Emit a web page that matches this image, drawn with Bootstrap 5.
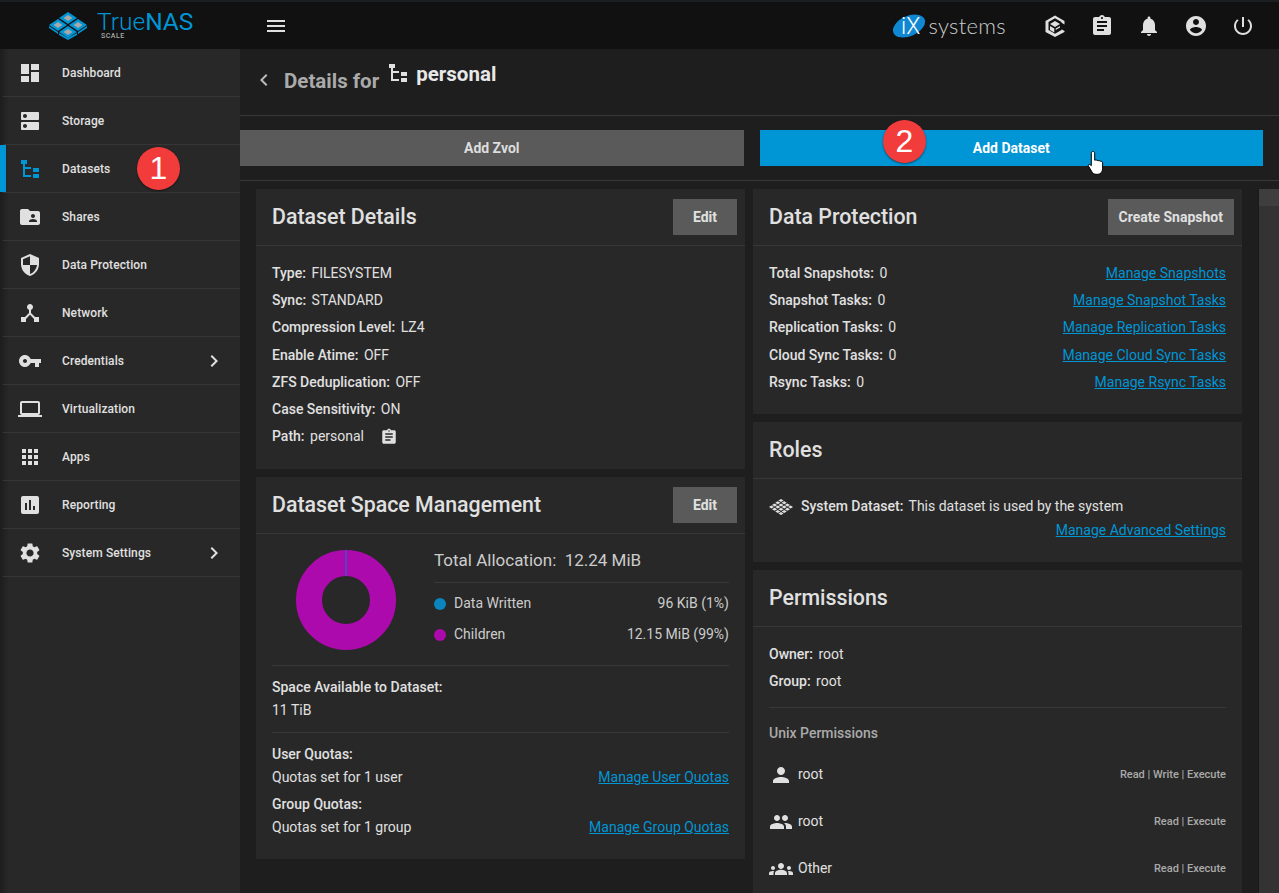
<!DOCTYPE html>
<html lang="en">
<head>
    <meta charset="UTF-8">
    <meta name="viewport" content="width=device-width, initial-scale=1.0">
    <title>TrueNAS SCALE - Datasets</title>
    <link rel="stylesheet" href="https://cdn.jsdelivr.net/npm/bootstrap@5.3.0/dist/css/bootstrap.min.css">
    <style>
        html, body { height: 100%; overflow: hidden; }
        body { background: #1e1e1e; color: #e0e0e0; font-family: Roboto, "Liberation Sans", sans-serif; font-size: 14px; }
        svg { fill: currentColor; display: block; flex: none; }
        a { color: #0095d5; }

        .top-bar { height: 49px; background: #111; border-top: 2px solid #1c1f22; flex: none; }
        .brand-box { width: 240px; padding-left: 48px; }
        .brand-name { color: #0095d5; font-size: 24.5px; line-height: 21px; font-weight: 300; margin-left: 9px; position: relative; top: -4px; }
        .brand-name b { font-weight: 400; }
        .brand-sub { position: absolute; left: 101px; top: 20px; font-size: 7px; line-height: 8px; font-weight: 500; color: #aaa; letter-spacing: .5px; }
        .menu-btn { color: #e0e0e0; margin-left: 24px; }
        .ix-logo { margin-right: 37px; color: #ccc; }
        .ix-word { font-family: Lato, Roboto, sans-serif; font-weight: 300; font-size: 22px; line-height: 24px; letter-spacing: .3px; margin-left: 0; }
        .top-icons { gap: 23px; margin-right: 24px; color: #e0e0e0; }

        .side-bar { width: 240px; flex: none; background: linear-gradient(90deg, #1d1d1d, #282828 9px); }
        .side-item { height: 48px; margin-left: 3px; border-bottom: 1px solid #363636; display: flex; align-items: center; color: #e0e0e0; font-size: 12px; font-weight: 500; letter-spacing: .1px; padding-right: 16px; position: relative; }
        .side-icon { width: 24px; margin-left: 15px; margin-right: 20px; }
        .side-chevron { margin-right: -2px; }
        .side-item.is-on::before { content: ""; position: absolute; left: -3px; top: 0; bottom: 0; width: 6px; background: #0095d5; }
        .side-item.is-on svg.side-icon { color: #0095d5; }

        .page-head { height: 67px; flex: none; border-bottom: 1px solid #383838; }
        .back-arrow { color: #bbb; margin-left: 12px; margin-right: 8px; margin-top: -4px; }
        .head-title { font-size: 20.5px; font-weight: 700; color: #aaa; margin-top: -2px; line-height: 24px; }
        .head-icon { margin-left: 7px; margin-right: 6px; margin-top: -18px; }
        .head-name { font-size: 20.5px; font-weight: 700; color: #e8e8e8; line-height: 22px; margin-bottom: 16px; }
        .action-row { height: 65px; flex: none; border-bottom: 1px solid #383838; padding: 14px 16px 0 0; gap: 16px; }
        .action-btn { flex: 1; height: 36px; border: 0; border-radius: 0; color: #e8e8e8; font-size: 14px; font-weight: 700; padding: 1px 0 0; }
        .btn-grey { background: #5a5a5a; color: #ddd; }
        .btn-blue { background: #0095d5; color: #fff; }

        .panel-area { min-height: 0; }
        .panel-cols { padding: 8px 16px 0; gap: 8px; width: 1018px; }
        .panel-col { width: 489px; flex: none; gap: 8px; }
        .panel { background: #282828; border: 0; border-radius: 0; color: #e0e0e0; }
        .panel .card-header { height: 57px; background: transparent; border-bottom: 1px solid #383838; border-radius: 0; padding: 0 8px 0 16px; }
        .panel-title { font-size: 21.33px; font-weight: 500; color: #e0e0e0; }
        .panel-btn { background: #5a5a5a; color: #e0e0e0; border: 0; border-radius: 0; height: 36px; padding: 1px 11px 0; font-size: 14px; font-weight: 700; min-width: 64px; }
        .panel .card-body { padding: 14px 16px; }
        .info-line { height: 27.2px; line-height: 27.2px; white-space: nowrap; }
        .info-line b { font-weight: 500; margin-right: 2px; }
        .space-top { padding: 9px 16px 0; height: 131px; }
        .donut-box { margin-left: 24px; margin-top: 7px; }
        .alloc-box { margin-left: 38px; }
        .alloc-title { font-size: 17px; color: #ccc; height: 36px; }
        .alloc-rule { margin: 3px 0 5px; }
        .alloc-line { height: 31px; color: #ccc; }
        .dot-mark { width: 12px; height: 12px; border-radius: 50%; margin-right: 8px; }
        .dot-written { background: #0a85c0; }
        .dot-children { background: #ac0aac; }
        .thin-rule { border-top: 1px solid #383838; }
        .space-rows { height: 67px; padding-top: 8px; }
        .quota-rows { padding-top: 8px; }
        .row-tall { height: 26px; line-height: 26px; }
        .row-short { height: 20px; line-height: 20px; }
        .row-gap { margin-top: 4px; }
        .roles-link { line-height: 20px; }
        .unix-head { margin-top: 12px; height: 52px; color: #aaa; font-weight: 500; }
        .perm-first { margin-top: -8px; }
        .perm-line { height: 47px; }
        .perm-line .side-text { color: #aaa; font-size: 11px; font-weight: 500; }
        .perm-icon { width: 24px; margin-right: 5px; }

        .scroll-track { width: 22px; flex: none; margin-top: 8px; margin-left: auto; border-left: 1px solid #1a1a1a; background: #333; }
        .scroll-up { height: 17px; background: #3e3e3e; }

        .step-mark { position: absolute; width: 43px; height: 43px; border-radius: 50%; background: #f23c3c; color: #fff; font-size: 32px; line-height: 43px; text-align: center; box-shadow: 0 1px 2px rgba(0,0,0,.5); font-family: "Liberation Sans", sans-serif; }
        .step-one { left: 137px; top: 147px; }
        .step-two { left: 883px; top: 120px; }
        .pointer-mark { position: absolute; left: 1087px; top: 150px; color: #fff; }
    </style>
</head>
<body>
<div class="d-flex flex-column vh-100">
    <div class="top-bar d-flex align-items-center">
        <div class="brand-box d-flex align-items-center position-relative">
            <svg width="40" height="28" viewBox="0 0 40 28">
                <g fill="#0095d5">
                    <polygon points="20,0 29,6 20,12 11,6"/>
                    <polygon points="10,7 19,13 10,19 1,13"/>
                    <polygon points="30,7 39,13 30,19 21,13"/>
                    <polygon points="20,14 29,20 20,26 11,20"/>
                    <polygon points="1,14 1,16 10,22 10,20"/>
                    <polygon points="39,14 39,16 30,22 30,20"/>
                    <polygon points="11,21 11,23 20,28 20,26"/>
                    <polygon points="29,21 29,23 20,28 20,26"/>
                </g>
                <g fill="#a8a8a8">
                    <polygon points="20,3 24.500,6 20,9 15.500,6"/>
                    <polygon points="10,10 14.500,13 10,16 5.500,13"/>
                    <polygon points="30,10 34.500,13 30,16 25.500,13"/>
                    <polygon points="20,17 24.500,20 20,23 15.500,20"/>
                </g>
            </svg>
            <span class="brand-name">True<b>NAS</b></span>
            <span class="brand-sub">SCALE</span>
        </div>
        <svg class="menu-btn" width="24" height="24" viewBox="0 0 24 24"><path d="M3 18h18v-2H3v2zm0-5h18v-2H3v2zm0-7v2h18V6H3z"/></svg>
        <div class="ix-logo ms-auto d-flex align-items-center">
            <svg width="36" height="28" viewBox="0 0 36 28">
                <ellipse cx="17" cy="14" rx="17" ry="10" transform="rotate(-24 17 14)" fill="#0f87d2"/>
                <text x="9" y="22" font-family="Roboto, sans-serif" font-size="23" font-weight="300" fill="#fff">iX</text>
            </svg>
            <span class="ix-word">systems</span>
        </div>
        <div class="top-icons d-flex align-items-center">
            <svg width="24" height="24" viewBox="0 0 24 24"><path d="M12 1.500 21.500 7v3.500l-3-1.700V8L12 4.300 5.500 8v8l6.500 3.700 6.500-3.700v-.8l3 1.700V18L12 23l-9.500-5V7z"/><path d="M12 7l5 3-5 3-5-3zM7 12l4.300 2.500v4L7 16zM17 12v1.500l-4.300 2.500v-1.500z"/></svg>
            <svg width="24" height="24" viewBox="0 0 24 24"><path d="M19 3h-4.180C14.400 1.840 13.300 1 12 1c-1.300 0-2.400.84-2.820 2H5c-1.100 0-2 .9-2 2v14c0 1.100.9 2 2 2h14c1.100 0 2-.9 2-2V5c0-1.100-.9-2-2-2zm-7 0c.55 0 1 .45 1 1s-.45 1-1 1-1-.45-1-1 .45-1 1-1zm2 14H7v-2h7v2zm3-4H7v-2h10v2zm0-4H7V7h10v2z"/></svg>
            <svg width="24" height="24" viewBox="0 0 24 24"><path d="M12 22c1.100 0 2-.9 2-2h-4c0 1.100.89 2 2 2zm6-6v-5c0-3.070-1.640-5.640-4.500-6.320V4c0-.83-.67-1.500-1.500-1.500s-1.500.67-1.500 1.500v.68C7.630 5.360 6 7.920 6 11v5l-2 2v1h16v-1l-2-2z"/></svg>
            <svg width="24" height="24" viewBox="0 0 24 24"><path d="M12 2C6.480 2 2 6.480 2 12s4.480 10 10 10 10-4.480 10-10S17.520 2 12 2zm0 3c1.660 0 3 1.340 3 3s-1.340 3-3 3-3-1.340-3-3 1.340-3 3-3zm0 14.200c-2.500 0-4.710-1.280-6-3.220.03-1.990 4-3.080 6-3.080 1.990 0 5.970 1.090 6 3.080-1.290 1.940-3.500 3.220-6 3.220z"/></svg>
            <svg width="24" height="24" viewBox="0 0 24 24"><path d="M13 3h-2v10h2V3zm4.830 2.170l-1.420 1.420C17.990 7.860 19 9.810 19 12c0 3.870-3.130 7-7 7s-7-3.130-7-7c0-2.190 1.010-4.140 2.580-5.420L6.170 5.170C4.230 6.820 3 9.260 3 12c0 4.970 4.030 9 9 9s9-4.030 9-9c0-2.740-1.230-5.180-3.170-6.830z"/></svg>
        </div>
    </div>

    <div class="d-flex flex-grow-1 overflow-hidden">
        <div class="side-bar">
            <div class="side-item"><svg class="side-icon" width="24" height="24" viewBox="0 0 24 24"><path d="M3 13h8V3H3v10zm0 8h8v-6H3v6zm10 0h8V11h-8v10zm0-18v6h8V3h-8z"/></svg>Dashboard</div>
            <div class="side-item"><svg class="side-icon" width="24" height="24" viewBox="0 0 24 24"><path d="M20 13H4c-.55 0-1 .45-1 1v6c0 .55.45 1 1 1h16c.55 0 1-.45 1-1v-6c0-.55-.45-1-1-1zM7 19c-1.100 0-2-.9-2-2s.9-2 2-2 2 .9 2 2-.9 2-2 2zM20 3H4c-.55 0-1 .45-1 1v6c0 .55.45 1 1 1h16c.55 0 1-.45 1-1V4c0-.55-.45-1-1-1zM7 9c-1.100 0-2-.9-2-2s.9-2 2-2 2 .9 2 2-.9 2-2 2z"/></svg>Storage</div>
            <div class="side-item is-on"><svg class="side-icon" width="24" height="24" viewBox="0 0 24 24"><path d="M3 3h6v4H3zM5 7h2v3h6v2H7v6h6v2H5zM15 11h6v4h-6zM15 17h6v4h-6z"/></svg>Datasets</div>
            <div class="side-item"><svg class="side-icon" width="24" height="24" viewBox="0 0 24 24"><path d="M20 6h-8l-2-2H4c-1.100 0-1.990.9-1.990 2L2 18c0 1.100.9 2 2 2h16c1.100 0 2-.9 2-2V8c0-1.100-.9-2-2-2zm-5 3c1.100 0 2 .9 2 2s-.9 2-2 2-2-.9-2-2 .9-2 2-2zm4 8h-8v-1c0-1.330 2.670-2 4-2s4 .67 4 2v1z"/></svg>Shares</div>
            <div class="side-item"><svg class="side-icon" width="24" height="24" viewBox="0 0 24 24"><path d="M12 1L3 5v6c0 5.550 3.840 10.740 9 12 5.160-1.260 9-6.450 9-12V5l-9-4zm0 10.990h7c-.53 4.120-3.280 7.790-7 8.940V12H5V6.300l7-3.110v8.800z"/></svg>Data Protection</div>
            <div class="side-item"><svg class="side-icon" width="24" height="24" viewBox="0 0 24 24"><path d="M17 16l-4-4V8.820C14.160 8.400 15 7.300 15 6c0-1.660-1.340-3-3-3S9 4.340 9 6c0 1.300.84 2.400 2 2.820V12l-4 4H3v5h5v-3.050l4-4.200 4 4.200V21h5v-5h-4z"/></svg>Network</div>
            <div class="side-item"><svg class="side-icon" width="24" height="24" viewBox="0 0 24 24"><path d="M12.650 10C11.830 7.670 9.610 6 7 6c-3.310 0-6 2.690-6 6s2.690 6 6 6c2.610 0 4.830-1.670 5.650-4H17v4h4v-4h2v-4H12.650zM7 14c-1.100 0-2-.9-2-2s.9-2 2-2 2 .9 2 2-.9 2-2 2z"/></svg>Credentials<svg class="side-chevron ms-auto" width="24" height="24" viewBox="0 0 24 24"><path d="M10 6L8.590 7.410 13.170 12l-4.580 4.590L10 18l6-6z"/></svg></div>
            <div class="side-item"><svg class="side-icon" width="24" height="24" viewBox="0 0 24 24"><path d="M20 18c1.100 0 1.990-.9 1.990-2L22 6c0-1.100-.9-2-2-2H4c-1.100 0-2 .9-2 2v10c0 1.100.9 2 2 2H0v2h24v-2h-4zM4 6h16v10H4V6z"/></svg>Virtualization</div>
            <div class="side-item"><svg class="side-icon" width="24" height="24" viewBox="0 0 24 24"><path d="M4 8h4V4H4v4zm6 12h4v-4h-4v4zm-6 0h4v-4H4v4zm0-6h4v-4H4v4zm6 0h4v-4h-4v4zm6-10v4h4V4h-4zm-6 4h4V4h-4v4zm6 6h4v-4h-4v4zm0 6h4v-4h-4v4z"/></svg>Apps</div>
            <div class="side-item"><svg class="side-icon" width="24" height="24" viewBox="0 0 24 24"><path d="M19 3H5c-1.100 0-2 .9-2 2v14c0 1.100.9 2 2 2h14c1.100 0 2-.9 2-2V5c0-1.100-.9-2-2-2zM9 17H7v-7h2v7zm4 0h-2V7h2v10zm4 0h-2v-4h2v4z"/></svg>Reporting</div>
            <div class="side-item"><svg class="side-icon" width="24" height="24" viewBox="0 0 24 24"><path d="M19.140 12.940c.04-.3.06-.61.06-.94 0-.32-.02-.64-.07-.94l2.030-1.580c.18-.14.23-.41.12-.61l-1.920-3.320c-.12-.22-.37-.29-.59-.22l-2.390.96c-.5-.38-1.030-.7-1.620-.94l-.36-2.540c-.04-.24-.24-.41-.48-.41h-3.840c-.24 0-.43.17-.47.41l-.36 2.540c-.59.24-1.130.57-1.620.94l-2.390-.96c-.22-.08-.47 0-.59.22L2.740 8.870c-.12.21-.08.47.12.61l2.030 1.580c-.05.3-.09.63-.09.94s.02.64.07.94l-2.030 1.580c-.18.14-.23.41-.12.61l1.920 3.320c.12.22.37.29.59.22l2.390-.96c.5.38 1.030.7 1.620.94l.36 2.540c.05.24.24.41.48.41h3.840c.24 0 .44-.17.47-.41l.36-2.540c.59-.24 1.130-.56 1.620-.94l2.390.96c.22.08.47 0 .59-.22l1.920-3.320c.12-.22.07-.47-.12-.61l-2.010-1.580zM12 15.600c-1.980 0-3.600-1.620-3.600-3.600s1.620-3.600 3.600-3.600 3.600 1.620 3.600 3.600-1.620 3.600-3.600 3.600z"/></svg>System Settings<svg class="side-chevron ms-auto" width="24" height="24" viewBox="0 0 24 24"><path d="M10 6L8.590 7.410 13.170 12l-4.580 4.590L10 18l6-6z"/></svg></div>
        </div>

        <div class="flex-grow-1 d-flex flex-column overflow-hidden">
            <div class="page-head d-flex align-items-center">
                <svg class="back-arrow" width="24" height="24" viewBox="0 0 24 24"><path d="M15.410 7.410 14 6l-6 6 6 6 1.410-1.410L10.830 12z"/></svg>
                <span class="head-title">Details for</span>
                <svg class="head-icon" width="24" height="24" viewBox="0 0 24 24"><path d="M3 3h6v4H3zM5 7h2v3h6v2H7v6h6v2H5zM15 11h6v4h-6zM15 17h6v4h-6z"/></svg>
                <span class="head-name">personal</span>
            </div>
            <div class="action-row d-flex">
                <button class="btn action-btn btn-grey">Add Zvol</button>
                <button class="btn action-btn btn-blue">Add Dataset</button>
            </div>
            <div class="panel-area flex-grow-1 d-flex overflow-hidden">
                <div class="panel-cols d-flex align-items-start">
                    <div class="panel-col d-flex flex-column">
                        <div class="card panel" style="height:280px">
                            <div class="card-header d-flex align-items-center justify-content-between">
                                <span class="panel-title">Dataset Details</span>
                                <button class="btn panel-btn">Edit</button>
                            </div>
                            <div class="card-body">
                                <div class="info-line"><b>Type:</b> FILESYSTEM</div>
                                <div class="info-line"><b>Sync:</b> STANDARD</div>
                                <div class="info-line"><b>Compression Level:</b> LZ4</div>
                                <div class="info-line"><b>Enable Atime:</b> OFF</div>
                                <div class="info-line"><b>ZFS Deduplication:</b> OFF</div>
                                <div class="info-line"><b>Case Sensitivity:</b> ON</div>
                                <div class="info-line d-flex align-items-center"><b>Path:</b>&nbsp;personal<svg class="ms-3" width="18" height="18" viewBox="0 0 24 24"><path d="M19 3h-4.180C14.400 1.840 13.300 1 12 1c-1.300 0-2.400.84-2.820 2H5c-1.100 0-2 .9-2 2v14c0 1.100.9 2 2 2h14c1.100 0 2-.9 2-2V5c0-1.100-.9-2-2-2zm-7 0c.55 0 1 .45 1 1s-.45 1-1 1-1-.45-1-1 .45-1 1-1zm2 14H7v-2h7v2zm3-4H7v-2h10v2zm0-4H7V7h10v2z"/></svg></div>
                            </div>
                        </div>
                        <div class="card panel" style="height:382px">
                            <div class="card-header d-flex align-items-center justify-content-between">
                                <span class="panel-title">Dataset Space Management</span>
                                <button class="btn panel-btn">Edit</button>
                            </div>
                            <div class="d-flex space-top">
                                <svg class="donut-box" width="100" height="100" viewBox="0 0 100 100">
                                    <circle cx="50" cy="50" r="37" fill="none" stroke="#ac0aac" stroke-width="26"/>
                                    <rect x="49" y="0" width="2" height="26" fill="#5a40c0"/>
                                </svg>
                                <div class="alloc-box flex-grow-1">
                                    <div class="alloc-title d-flex align-items-center">Total Allocation:&nbsp; 12.24 MiB</div>
                                    <div class="thin-rule alloc-rule"></div>
                                    <div class="alloc-line d-flex align-items-center"><span class="dot-mark dot-written"></span>Data Written<span class="ms-auto">96 KiB (1%)</span></div>
                                    <div class="alloc-line d-flex align-items-center"><span class="dot-mark dot-children"></span>Children<span class="ms-auto">12.15 MiB (99%)</span></div>
                                </div>
                            </div>
                            <div class="px-3">
                                <div class="thin-rule space-rows">
                                    <div class="info-line row-tall"><b>Space Available to Dataset:</b></div>
                                    <div class="info-line row-short">11 TiB</div>
                                </div>
                                <div class="thin-rule quota-rows">
                                    <div class="info-line row-tall"><b>User Quotas:</b></div>
                                    <div class="info-line row-short d-flex justify-content-between"><span>Quotas set for 1 user</span><a href="#">Manage User Quotas</a></div>
                                    <div class="info-line row-tall row-gap"><b>Group Quotas:</b></div>
                                    <div class="info-line row-short d-flex justify-content-between"><span>Quotas set for 1 group</span><a href="#">Manage Group Quotas</a></div>
                                </div>
                            </div>
                        </div>
                    </div>
                    <div class="panel-col d-flex flex-column">
                        <div class="card panel" style="height:225px">
                            <div class="card-header d-flex align-items-center justify-content-between">
                                <span class="panel-title">Data Protection</span>
                                <button class="btn panel-btn">Create Snapshot</button>
                            </div>
                            <div class="card-body">
                                <div class="info-line d-flex justify-content-between"><span><b>Total Snapshots:</b> 0</span><a href="#">Manage Snapshots</a></div>
                                <div class="info-line d-flex justify-content-between"><span><b>Snapshot Tasks:</b> 0</span><a href="#">Manage Snapshot Tasks</a></div>
                                <div class="info-line d-flex justify-content-between"><span><b>Replication Tasks:</b> 0</span><a href="#">Manage Replication Tasks</a></div>
                                <div class="info-line d-flex justify-content-between"><span><b>Cloud Sync Tasks:</b> 0</span><a href="#">Manage Cloud Sync Tasks</a></div>
                                <div class="info-line d-flex justify-content-between"><span><b>Rsync Tasks:</b> 0</span><a href="#">Manage Rsync Tasks</a></div>
                            </div>
                        </div>
                        <div class="card panel" style="height:140px">
                            <div class="card-header d-flex align-items-center"><span class="panel-title">Roles</span></div>
                            <div class="card-body">
                                <div class="info-line d-flex align-items-center" style="height:27px">
                                    <svg class="me-2" width="24" height="16" viewBox="0 0 24 16" fill="#ddd"><path d="M12 0l2.600 1.500-2.600 1.500-2.600-1.500zM15.200 2.200l2.600 1.500-2.600 1.500-2.600-1.500zM8.800 2.200l2.600 1.500-2.600 1.500-2.600-1.500zM18.400 4.400l2.600 1.500-2.600 1.500-2.600-1.500zM12 4.400l2.600 1.500-2.600 1.500-2.600-1.500zM5.600 4.400l2.600 1.500-2.600 1.500-2.600-1.500zM21.600 6.600l2.400 1.400-2.400 1.400-2.600-1.400zM15.200 6.600l2.600 1.500-2.600 1.500-2.600-1.500zM8.800 6.600l2.600 1.500-2.600 1.500-2.600-1.500zM2.400 6.600l2.600 1.400-2.600 1.400-2.400-1.400zM18.400 8.800l2.600 1.500-2.600 1.500-2.600-1.500zM12 8.800l2.600 1.500-2.600 1.500-2.600-1.500zM5.600 8.800l2.600 1.500-2.600 1.500-2.600-1.500zM15.200 11l2.600 1.500-2.600 1.500-2.600-1.500zM8.800 11l2.600 1.500-2.600 1.500-2.600-1.500zM12 13l2.600 1.500-2.600 1.500-2.600-1.500z"/></svg>
                                    <span><b>System Dataset:</b> This dataset is used by the system</span>
                                </div>
                                <div class="roles-link text-end"><a href="#">Manage Advanced Settings</a></div>
                            </div>
                        </div>
                        <div class="card panel" style="height:340px">
                            <div class="card-header d-flex align-items-center"><span class="panel-title">Permissions</span></div>
                            <div class="card-body">
                                <div class="info-line"><b>Owner:</b> root</div>
                                <div class="info-line"><b>Group:</b> root</div>
                                <div class="thin-rule unix-head d-flex align-items-center">Unix Permissions</div>
                                <div class="perm-line perm-first d-flex align-items-center"><svg class="perm-icon" width="24" height="24" viewBox="0 0 24 24"><path d="M12 12c2.210 0 4-1.790 4-4s-1.790-4-4-4-4 1.790-4 4 1.790 4 4 4zm0 2c-2.670 0-8 1.340-8 4v2h16v-2c0-2.660-5.330-4-8-4z"/></svg>root<span class="side-text ms-auto">Read | Write | Execute</span></div>
                                <div class="perm-line d-flex align-items-center"><svg class="perm-icon" width="24" height="24" viewBox="0 0 24 24"><path d="M16 11c1.660 0 2.990-1.340 2.990-3S17.660 5 16 5c-1.660 0-3 1.340-3 3s1.340 3 3 3zm-8 0c1.660 0 2.990-1.340 2.990-3S9.660 5 8 5C6.340 5 5 6.340 5 8s1.340 3 3 3zm0 2c-2.330 0-7 1.170-7 3.500V19h14v-2.500c0-2.330-4.670-3.500-7-3.500zm8 0c-.29 0-.62.02-.97.05 1.160.84 1.970 1.970 1.970 3.450V19h6v-2.500c0-2.330-4.670-3.500-7-3.500z"/></svg>root<span class="side-text ms-auto">Read | Execute</span></div>
                                <div class="perm-line d-flex align-items-center"><svg class="perm-icon" width="24" height="24" viewBox="0 0 24 24"><path d="M12 12.750c1.630 0 3.070.39 4.240.9 1.080.48 1.760 1.560 1.760 2.730V18H6v-1.610c0-1.180.68-2.260 1.760-2.730 1.170-.52 2.610-.91 4.240-.91zM4 13c1.100 0 2-.9 2-2s-.9-2-2-2-2 .9-2 2 .9 2 2 2zm1.130 1.100c-.37-.06-.74-.1-1.130-.1-.99 0-1.930.21-2.780.58C.48 14.900 0 15.620 0 16.430V18h4.500v-1.610c0-.83.23-1.610.63-2.290zM20 13c1.100 0 2-.9 2-2s-.9-2-2-2-2 .9-2 2 .9 2 2 2zm4 3.430c0-.81-.48-1.530-1.220-1.850-.85-.37-1.790-.58-2.780-.58-.39 0-.76.04-1.130.1.4.68.63 1.460.63 2.290V18H24v-1.570zM12 6c1.660 0 3 1.340 3 3s-1.340 3-3 3-3-1.340-3-3 1.340-3 3-3z"/></svg>Other<span class="side-text ms-auto">Read | Execute</span></div>
                            </div>
                        </div>
                    </div>
                </div>
                <div class="scroll-track"><div class="scroll-up"></div></div>
            </div>
        </div>
    </div>
</div>

<div class="step-mark step-one">1</div>
<div class="step-mark step-two">2</div>
<svg class="pointer-mark" width="20" height="26" viewBox="0 0 20 26">
    <path d="M6 1.500c1 0 1.700.7 1.700 1.700v7l1-.2c.6-.1 1.100.1 1.400.5.6-.3 1.300-.2 1.700.3.700-.3 1.400-.1 1.800.5 1-.2 2 .4 2 1.500v6c0 3-2 5.500-5 5.500H9c-2 0-3.200-1-4.200-2.700L1.400 16c-.6-1 .8-2.200 1.800-1.300l1.100 1V3.200c0-1 .7-1.700 1.700-1.700z" stroke="#000" stroke-width="1"/>
</svg>
<script src="https://cdn.jsdelivr.net/npm/bootstrap@5.3.0/dist/js/bootstrap.bundle.min.js"></script>
</body>
</html>
